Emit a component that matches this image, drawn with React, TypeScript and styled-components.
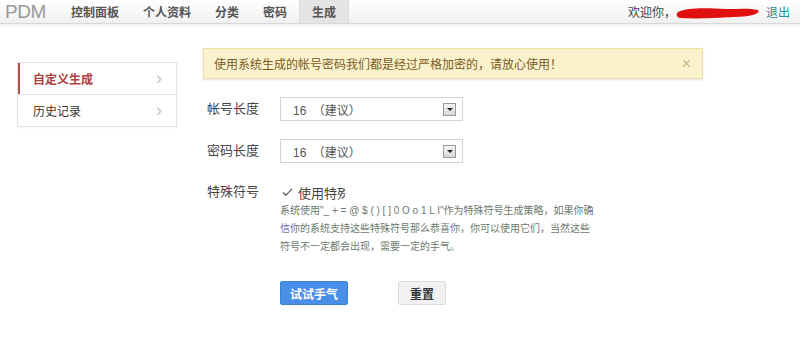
import styled, { createGlobalStyle } from "styled-components";

const GlobalStyle = createGlobalStyle`
  body {
    margin: 0;
    background: #ffffff;
    font-family: "Liberation Sans", "Noto Sans CJK SC", sans-serif;
    color: #333333;
  }
`;

const NAV_ITEMS = ["控制面板", "个人资料", "分类", "密码", "生成"];

const App = () => {
  return (
    <Page>
      <GlobalStyle />
      <NavBar>
        <Brand>PDM</Brand>
        <NavList>
          {NAV_ITEMS.map((item) => (
            <NavItem key={item} $active={item === "生成"}>
              {item}
            </NavItem>
          ))}
        </NavList>
        <UserBox>
          欢迎你，
          <Scribble viewBox="0 0 84 12" aria-hidden>
            <path
              d="M2 5 C12 0 32 1 50 2 C62 2 74 1 82 3 C85 7 74 10 58 10 C40 11 20 12 4 11 C0 10 0 7 2 5 Z"
              fill="#e01010"
            />
          </Scribble>
          <LogoutLink>退出</LogoutLink>
        </UserBox>
      </NavBar>

      <Body>
        <SideMenu>
          <SideItem $active>
            自定义生成<Chevron>›</Chevron>
          </SideItem>
          <SideItem>
            历史记录<Chevron>›</Chevron>
          </SideItem>
        </SideMenu>

        <Main>
          <Alert>
            使用系统生成的帐号密码我们都是经过严格加密的，请放心使用！
            <CloseMark>×</CloseMark>
          </Alert>

          <FormRow>
            <Label>帐号长度</Label>
            <SelectBox>
              16 （建议）
              <ArrowButton />
            </SelectBox>
          </FormRow>

          <FormRow>
            <Label>密码长度</Label>
            <SelectBox>
              16 （建议）
              <ArrowButton />
            </SelectBox>
          </FormRow>

          <FormRow $top>
            <Label>特殊符号</Label>
            <div>
              <CheckLine>
                <CheckMark viewBox="0 0 12 10" aria-hidden>
                  <path d="M1 5.5 L4.2 8.5 L11 1.5" fill="none" stroke="#555" strokeWidth="1.3" />
                </CheckMark>
                <CheckText>使用特殊符号</CheckText>
              </CheckLine>
              <Hint>
                系统使用"_ + = @ $ ( ) [ ] 0 O o 1 L I"作为特殊符号生成策略，如果你确
                <br />
                信你的系统支持这些特殊符号那么恭喜你，你可以使用它们，当然这些
                <br />
                符号不一定都会出现，需要一定的手气。
              </Hint>
            </div>
          </FormRow>

          <Actions>
            <Button $primary>试试手气</Button>
            <Button>重置</Button>
          </Actions>
        </Main>
      </Body>
    </Page>
  );
};

export default App;

const Page = styled.div`
  width: 800px;
  height: 364px;
  overflow: hidden;
`;

const NavBar = styled.div`
  display: flex;
  align-items: stretch;
  height: 23px;
  background: linear-gradient(#ffffff, #f0f0f0);
  border-bottom: 1px solid #d8d8d8;
  box-shadow: 0 1px 3px rgba(0, 0, 0, 0.08);
`;

const Brand = styled.div`
  display: flex;
  align-items: center;
  padding-left: 5px;
  width: 54px;
  font-size: 19px;
  color: #9a9a9a;
  letter-spacing: -0.5px;
`;

const NavList = styled.div`
  display: flex;
`;

const NavItem = styled.div<{ $active?: boolean }>`
  display: flex;
  align-items: center;
  padding: 0 12px;
  font-size: 12px;
  font-weight: bold;
  color: #555555;
  background: ${(p) => (p.$active ? "#e4e4e4" : "transparent")};
  border-left: ${(p) => (p.$active ? "1px solid #dadada" : "none")};
  border-right: ${(p) => (p.$active ? "1px solid #dadada" : "none")};
`;

const UserBox = styled.div`
  margin-left: auto;
  display: flex;
  align-items: center;
  padding-right: 10px;
  font-size: 12px;
  color: #444444;
`;

const Scribble = styled.svg`
  width: 84px;
  height: 12px;
  margin: 3px 4px 0 0;
`;

const LogoutLink = styled.span`
  margin-left: 2px;
  color: #2b8ea6;
`;

const Body = styled.div`
  display: flex;
  padding: 24px 0 0 17px;
`;

const SideMenu = styled.div`
  width: 158px;
  margin-top: 14px;
  border: 1px solid #e2e2e2;
  align-self: flex-start;
  box-shadow: 0 1px 2px rgba(0, 0, 0, 0.04);
`;

const SideItem = styled.div<{ $active?: boolean }>`
  display: flex;
  align-items: center;
  justify-content: space-between;
  height: 31px;
  padding: 0 14px 0 ${(p) => (p.$active ? "13px" : "15px")};
  font-size: 12px;
  font-weight: ${(p) => (p.$active ? "bold" : "normal")};
  color: ${(p) => (p.$active ? "#b0413e" : "#333333")};
  border-left: ${(p) => (p.$active ? "2px solid #b5514f" : "none")};
  & + & {
    border-top: 1px solid #e6e6e6;
  }
`;

const Chevron = styled.span`
  font-size: 18px;
  font-weight: normal;
  color: #c4c4c4;
  line-height: 1;
  margin-top: -2px;
`;

const Main = styled.div`
  margin-left: 26px;
  display: flex;
  flex-direction: column;
`;

const Alert = styled.div`
  display: flex;
  align-items: center;
  justify-content: space-between;
  width: 500px;
  height: 31px;
  box-sizing: border-box;
  padding: 0 11px 0 10px;
  background: #faf2cc;
  border: 1px solid #efe1a4;
  box-shadow: 0 1px 2px rgba(0, 0, 0, 0.12);
  font-size: 12px;
  color: #7a5b22;
`;

const CloseMark = styled.span`
  font-size: 16px;
  color: #c9b98a;
`;

const FormRow = styled.div<{ $top?: boolean }>`
  display: flex;
  align-items: ${(p) => (p.$top ? "flex-start" : "center")};
  margin-top: ${(p) => (p.$top ? "19px" : "18px")};
`;

const Label = styled.div`
  width: 77px;
  box-sizing: border-box;
  padding-left: 4px;
  font-size: 13px;
  color: #444444;
  line-height: 20px;
`;

const SelectBox = styled.div`
  display: flex;
  align-items: center;
  justify-content: space-between;
  width: 183px;
  height: 24px;
  box-sizing: border-box;
  padding: 0 6px 0 12px;
  border: 1px solid #d4d4d4;
  font-size: 12px;
  color: #555555;
  word-spacing: 3px;
`;

const ArrowButton = styled.span`
  position: relative;
  width: 13px;
  height: 13px;
  box-sizing: border-box;
  border: 1px solid #9a9a9a;
  background: linear-gradient(#f4f4f4, #d8d8d8);
  &::after {
    content: "";
    position: absolute;
    left: 3px;
    top: 4px;
    border-left: 3px solid transparent;
    border-right: 3px solid transparent;
    border-top: 3px solid #222222;
  }
`;

const CheckLine = styled.div`
  display: flex;
  align-items: center;
  height: 20px;
  padding-left: 2px;
`;

const CheckMark = styled.svg`
  width: 11px;
  height: 10px;
  margin-right: 5px;
`;

const CheckText = styled.span`
  display: inline-block;
  width: 47px;
  overflow: hidden;
  white-space: nowrap;
  font-size: 13px;
  color: #444444;
`;

const Hint = styled.p`
  margin: 0;
  font-size: 10px;
  line-height: 18px;
  color: #6c7a6c;
  white-space: nowrap;
`;

const Actions = styled.div`
  display: flex;
  gap: 50px;
  margin-top: 25px;
  padding-left: 77px;
`;

const Button = styled.button<{ $primary?: boolean }>`
  height: 24px;
  padding: 0 ${(p) => (p.$primary ? "9px" : "11px")};
  font-family: inherit;
  font-size: 12px;
  font-weight: bold;
  border-radius: 2px;
  color: ${(p) => (p.$primary ? "#ffffff" : "#333333")};
  background: ${(p) => (p.$primary ? "#4a8fe7" : "#f1f1f1")};
  border: 1px solid ${(p) => (p.$primary ? "#3f7fd6" : "#dcdcdc")};
  cursor: pointer;
`;
